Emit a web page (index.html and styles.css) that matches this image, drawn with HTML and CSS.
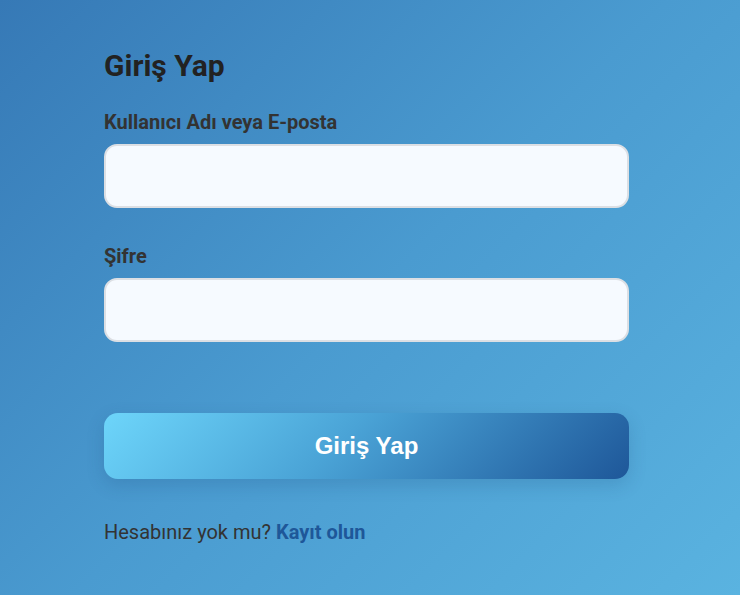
FILE: index.html
```html
<!DOCTYPE html>
<html lang="tr">
<head>
<meta charset="utf-8">
<title>Giriş Yap</title>
<link rel="stylesheet" href="styles.css">
</head>
<body>
<main class="page">
  <form class="login">
    <h1 class="title">Giriş Yap</h1>
    <label class="label" for="user">Kullanıcı Adı veya E-posta</label>
    <input class="field" id="user" type="text">
    <label class="label label-second" for="pass">Şifre</label>
    <input class="field" id="pass" type="password">
    <button class="submit" type="button">Giriş Yap</button>
    <p class="signup">Hesabınız yok mu? <a class="signup-link" href="#">Kayıt olun</a></p>
  </form>
</main>
</body>
</html>
```
FILE: styles.css
```css
* { box-sizing: border-box; }
html, body {
  margin: 0;
  height: 100%;
}
body {
  background: linear-gradient(135deg, #3679b6 0%, #4a9bd0 50%, #5ab3e0 100%);
  font-family: Roboto, "Noto Sans", sans-serif;
  overflow: hidden;
}
.page {
  padding: 48px 0 0 104px;
}
.login {
  width: 525px;
  display: flex;
  flex-direction: column;
}
.title {
  margin: 0;
  font-size: 30px;
  line-height: 36px;
  font-weight: 700;
  color: #222;
}
.label {
  margin-top: 26px;
  font-size: 20px;
  line-height: 24px;
  font-weight: 700;
  color: #333;
}
.label-second {
  margin-top: 36px;
}
.field {
  margin-top: 10px;
  height: 64px;
  border: 2px solid #dcdfe4;
  border-radius: 13px;
  background: #f6faff;
  font-size: 18px;
  padding: 0 16px;
  outline: none;
}
.submit {
  margin-top: 71px;
  height: 66px;
  border: 0;
  border-radius: 14px;
  background: linear-gradient(135deg, #6dd5fa 0%, #4aa3d6 45%, #1e5799 100%);
  color: #fff;
  font-family: "Liberation Sans", Arial, sans-serif;
  font-size: 24px;
  font-weight: 700;
  box-shadow: 0 6px 18px rgba(20, 60, 110, 0.18);
  cursor: pointer;
}
.signup {
  margin: 41px 0 0;
  font-size: 20px;
  line-height: 24px;
  color: #333;
}
.signup-link {
  color: #1e5799;
  font-weight: 700;
  text-decoration: none;
}
```
